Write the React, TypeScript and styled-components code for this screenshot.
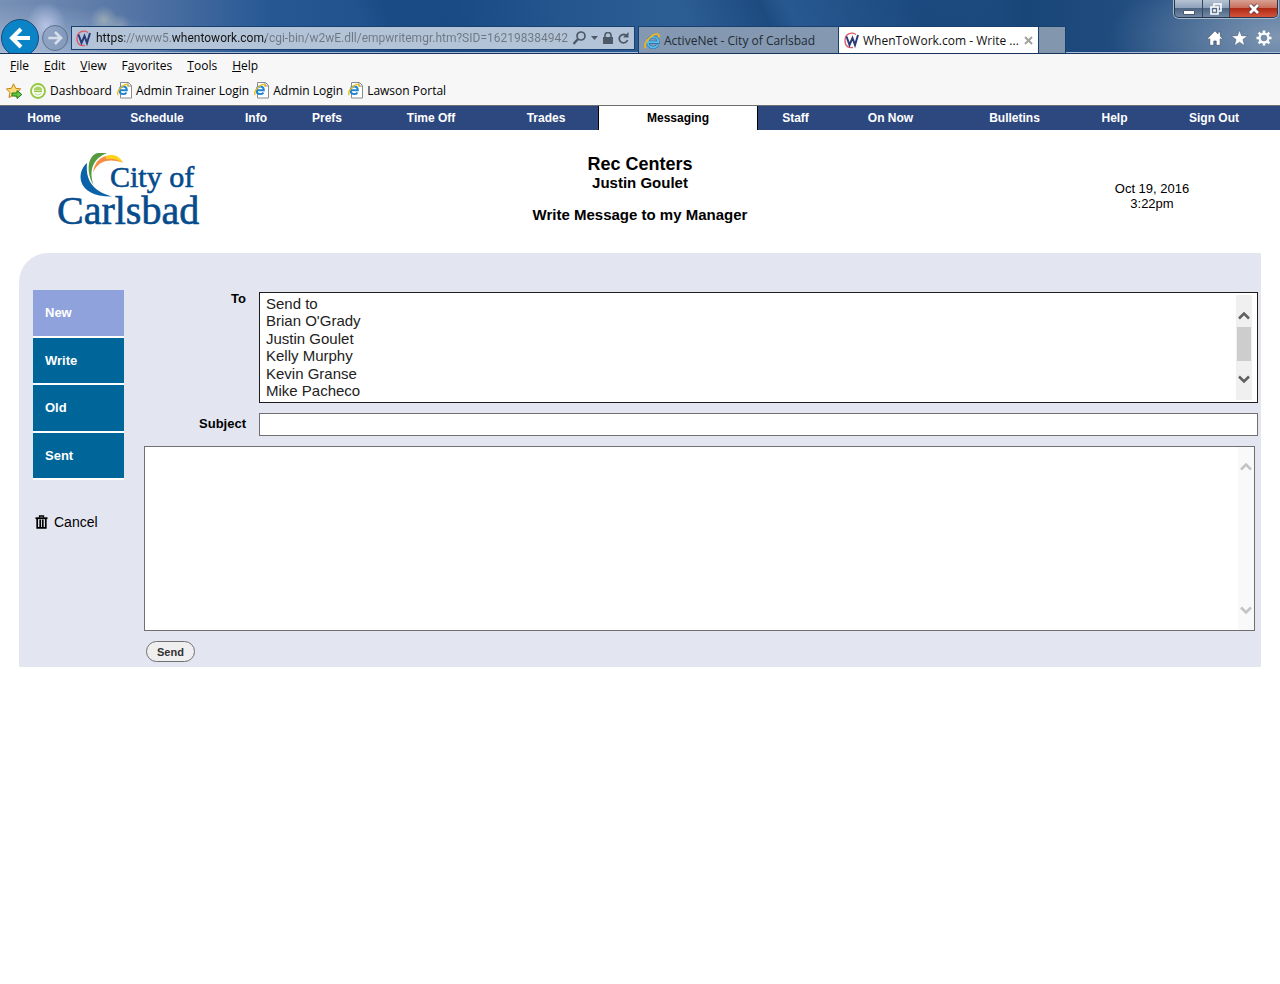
import React from 'react';
import styled, { createGlobalStyle } from 'styled-components';

const GlobalStyle = createGlobalStyle`
  * { box-sizing: border-box; }
  body {
    margin: 0;
    background: #fff;
    color: #000;
    font-family: "Liberation Sans", Arial, sans-serif;
  }
  a { color: inherit; text-decoration: none; }
  svg { display: block; flex: none; }
`;

/* ---------- Browser frame ---------- */

const Frame = styled.header`
  display: flex;
  align-items: flex-end;
  height: 54px;
  overflow: hidden;
  border-bottom: 1px solid #17335c;
  box-shadow: inset 0 -1px 0 #a9bcd8;
  font-family: "Open Sans", "Noto Sans", sans-serif;
  font-size: 12px;
  background:
    radial-gradient(ellipse 20px 24px at 46px 26px, #c3cdeecc, #c3cdee00),
    radial-gradient(ellipse 14px 14px at 104px 20px, #c3cbbd88, #c3cbbd00),
    radial-gradient(ellipse 12px 12px at 119px 26px, #c3bfbd66, #c3bfbd00),
    radial-gradient(ellipse 180px 60px at 20px 64px, #b8c8dedd, #b8c8de00),
    radial-gradient(ellipse 170px 80px at 100% 70%, #8097b2, #8097b200),
    linear-gradient(65deg, transparent 29%, #123f7655 31%, transparent 44%, transparent 54%, #0d366a66 60%, transparent 62%, #0d366a55 72%, transparent 78%),
    linear-gradient(90deg, #7890b5 0, #4e70a2 12%, #275894 21%, #1c4d87 35%, #2c5d93 52%, #24558c 70%, #194679 80%, #2b568a 100%);
`;

const BackButton = styled.button`
  display: grid;
  place-items: center;
  flex: none;
  width: 38px;
  height: 38px;
  margin: 0 3px -4px 1px;
  padding: 0;
  border: 1px solid #1c4a78;
  border-radius: 50%;
  background: #0a84c6;
`;

const ForwardButton = styled.button`
  display: grid;
  place-items: center;
  flex: none;
  width: 26px;
  height: 26px;
  margin: 0 3px 2px 0;
  padding: 0;
  border: 1px solid #5c708f;
  border-radius: 50%;
  background: #8196b799;
`;

const AddressBar = styled.form`
  display: flex;
  align-items: center;
  flex: 0 1 564px;
  min-width: 200px;
  height: 24px;
  margin: 0 3px 3px 0;
  padding: 0 5px 0 4px;
  gap: 5px;
  border: 1px solid #173f70;
  background: #b3c4d9;
`;

const AddressInput = styled.input`
  flex: 1;
  min-width: 0;
  height: 20px;
  padding: 0;
  border: 0;
  outline: 0;
  font: 12px Roboto, "Open Sans", sans-serif;
  color: transparent;
  background: linear-gradient(90deg, #111 29px, #6f7681 29px 76px, #111 76px 170px, #6f7681 170px);
  -webkit-background-clip: text;
  background-clip: text;
`;

const IconButton = styled.button`
  padding: 0;
  border: 0;
  background: none;
`;

const Tab = styled.div<{ $active?: boolean }>`
  display: flex;
  align-items: center;
  flex: 0 1 200px;
  min-width: 0;
  height: 27px;
  padding: 1px 5px 0;
  gap: 4px;
  border: 1px solid #17406f;
  border-width: 1px 0 0 1px;
  white-space: nowrap;
  color: ${p => (p.$active ? '#111' : '#222b36')};
  background: ${p => (p.$active ? '#fff' : '#8499b1')};
`;

const TabTitle = styled.span`
  flex: 1;
`;

const NewTab = styled.button`
  flex: none;
  width: 28px;
  height: 27px;
  padding: 0;
  border: 1px solid #17406f;
  border-bottom: 0;
  background: #8296ae;
`;

const FrameEnd = styled.div`
  display: flex;
  flex-direction: column;
  align-items: flex-end;
  justify-content: space-between;
  align-self: stretch;
  flex: none;
  margin-left: auto;
  padding: 0 2px 7px 0;
`;

const WindowControls = styled.div`
  display: flex;
  height: 18px;
  overflow: hidden;
  border: 1px solid #26364c;
  border-top: 0;
  border-radius: 0 0 5px 5px;
  box-shadow: 0 0 0 1px #a9b9cc;
`;

const WindowButton = styled.button<{ $close?: boolean }>`
  display: grid;
  place-items: center;
  width: ${p => (p.$close ? 48 : 27)}px;
  padding: 0;
  border: 0;
  border-left: 1px solid #34465f;
  background: ${p =>
    p.$close
      ? 'linear-gradient(#d9a193, #c9705d 45%, #b02a14 50%, #d4543c)'
      : 'linear-gradient(#b6c3d3, #8fa2ba 45%, #4d6684 50%, #7189a5)'};
  &:first-child { border-left: 0; }
`;

const Tools = styled.div`
  display: flex;
  gap: 8px;
  padding-right: 6px;
`;

const Bars = styled.div`
  height: 52px;
  border-bottom: 1px solid #6e6e6e;
  background: #f7f7f7;
  font-family: "Open Sans", "Noto Sans", sans-serif;
  font-size: 12px;
  line-height: 16px;
`;

const MenuBar = styled.nav`
  display: flex;
  gap: 15px;
  padding: 4px 10px;
`;

const MenuButton = styled.button`
  padding: 0;
  border: 0;
  background: none;
  color: #000;
  font: inherit;
`;

const FavoritesBar = styled.nav`
  display: flex;
  align-items: center;
  gap: 5px;
  padding: 4px 6px 0;
`;

const AddButton = styled(IconButton)`
  margin-right: 3px;
`;

const Favorite = styled.a`
  display: flex;
  align-items: center;
  gap: 4px;
  white-space: nowrap;
`;

/* ---------- Site ---------- */

const SiteNav = styled.nav`
  display: grid;
  grid-template-columns: 88fr 138fr 60fr 82fr 126fr 104fr 160fr 75fr 115fr 133fr 67fr 132fr;
  height: 24px;
  background: #2d487f;
  font-size: 12px;
  font-weight: bold;
  line-height: 24px;
  text-align: center;
`;

const NavLink = styled.a<{ $active?: boolean }>`
  white-space: nowrap;
  color: ${p => (p.$active ? '#000' : '#fff')};
  background: ${p => (p.$active ? '#fff' : 'none')};
  border: solid #000;
  border-width: ${p => (p.$active ? '0 1px' : '0')};
`;

const Masthead = styled.section`
  display: grid;
  grid-template-columns: 1fr 3fr 1fr;
  justify-items: center;
  padding: 23px 0 14px;
`;

const Headings = styled.div`
  text-align: center;
  font-weight: bold;
`;

const Org = styled.h1`
  margin: 0;
  font-size: 18px;
  line-height: 22px;
`;

const Line = styled.h2`
  margin: 0 0 16px;
  font-size: 15px;
  line-height: 16px;
`;

const Clock = styled.time`
  padding-top: 28px;
  font-size: 13px;
  line-height: 15px;
  text-align: center;
`;

const Panel = styled.main`
  display: flex;
  gap: 20px;
  margin: 0 19px;
  padding: 37px 3px 5px 14px;
  border-top-left-radius: 29px;
  background: #e3e5f0;
`;

const Side = styled.aside`
  flex: none;
  width: 91px;
`;

const SideList = styled.ul`
  display: grid;
  grid-auto-rows: 1fr;
  height: 190px;
  margin: 0 0 33px;
  padding: 0;
  list-style: none;
`;

const SideItem = styled.li<{ $active?: boolean }>`
  display: flex;
  align-items: center;
  padding-left: 12px;
  border-bottom: 2px solid #fff;
  background: ${p => (p.$active ? '#8fa2dc' : '#00669a')};
  color: #fff;
  font-size: 13px;
  font-weight: bold;
`;

const Cancel = styled.a`
  display: flex;
  align-items: center;
  gap: 6px;
  padding-left: 2px;
  font-size: 14px;
  line-height: 18px;
`;

const Form = styled.form`
  flex: 1;
  min-width: 0;
  padding-top: 2px;
`;

const Fields = styled.div`
  display: grid;
  grid-template-columns: 102px 1fr;
  gap: 10px 13px;
  margin-bottom: 10px;
`;

const Label = styled.label`
  font-size: 13px;
  font-weight: bold;
  line-height: 14px;
  text-align: right;
  &:nth-of-type(2) { padding-top: 4px; }
`;

const Scrollable = styled.div`
  position: relative;
`;

const Recipients = styled.select`
  display: block;
  width: 100%;
  height: 111px;
  padding: 2px 6px;
  overflow: hidden;
  border: 1px solid #1c1c1c;
  border-radius: 0;
  background: #fff;
  color: #222;
  font: 15px "Liberation Sans", Arial, sans-serif;
  scrollbar-width: none;
  option { padding: 0; min-height: 0; height: 17px; line-height: 17px; }
  option:nth-child(even) { height: 18px; }
`;

const Subject = styled.input`
  display: block;
  width: 100%;
  height: 23px;
  padding: 0 6px;
  border: 1px solid #707070;
  font-size: 15px;
`;

const MessageBox = styled(Scrollable)`
  margin: 0 3px 10px 0;
`;

const Message = styled.textarea`
  display: block;
  width: 100%;
  height: 185px;
  resize: none;
  border: 1px solid #707070;
  font-size: 15px;
`;

const Scrollbar = styled.div<{ $inset: number; $shade: string; $pad: number }>`
  position: absolute;
  top: ${p => p.$inset}px;
  right: ${p => (p.$inset === 1 ? 1 : 6)}px;
  bottom: ${p => p.$inset}px;
  display: flex;
  flex-direction: column;
  align-items: center;
  justify-content: space-between;
  width: 16px;
  padding: ${p => p.$pad}px 0;
  background: ${p => p.$shade};
`;

const Thumb = styled.div`
  width: 14px;
  height: 34px;
  margin-bottom: 8px;
  background: #cdcdcd;
`;

const Send = styled.button`
  display: block;
  height: 21px;
  margin-left: 2px;
  padding: 0 10px;
  border: 1px solid #707070;
  border-radius: 11px;
  background: #efefef;
  color: #333;
  font: bold 11px "Liberation Sans", Arial, sans-serif;
`;

/* ---------- Drawings ---------- */

const Arrow = ({ size, flip, color }: { size: number; flip?: boolean; color: string }) => (
  <svg width={size} height={size} viewBox="0 0 24 24" fill="none" stroke={color} strokeWidth="4">
    <path d={flip ? 'M2 12h18M12 3l9 9-9 9' : 'M22 12H4M13 3l-9 9 9 9'} />
  </svg>
);

const SiteMark = () => (
  <svg width="15" height="17" viewBox="0 0 15 17" fill="none">
    <path d="M12 2.500C7-.5 1 2 1 8.500s4 7.500 8 7" stroke="#e0596a" strokeWidth="1.300" />
    <path d="M2.500 4.500 5.500 13 8.500 6l2.500 7 3-10" stroke="#2b3a78" strokeWidth="2" />
  </svg>
);

const Explorer = () => (
  <svg width="16" height="16" viewBox="0 0 16 16" fill="none">
    <path d="M4 9.200h10.200C14.200 5.800 12 3.800 9 3.800S3.800 6 3.800 9.200s2.200 5.300 5.200 5.300c2.200 0 3.800-.9 4.600-2.600" stroke="#1c6fae" strokeWidth="3" />
    <path d="M4 9.200h10.200C14.200 5.800 12 3.800 9 3.800S3.800 6 3.800 9.200s2.200 5.300 5.200 5.300c2.200 0 3.800-.9 4.600-2.600" stroke="#56bdee" strokeWidth="1.800" />
    <path d="M2 15C-1 13 3.500 4.500 10 1.700c4-1.700 5.800-.2 4.600 2.800" stroke="#f3b71a" strokeWidth="1.700" />
  </svg>
);

const PageIcon = () => (
  <svg width="15" height="17" viewBox="0 0 15 17" fill="none">
    <path d="M3.500.5h8l3 3v12.500h-11z" fill="#fff" stroke="#8b8b8b" />
    <path d="M11 .5V4h3.500" stroke="#8b8b8b" />
    <path d="M2.500 8.300h7.300c0-2.300-1.500-3.700-3.500-3.700S2.700 6.200 2.700 8.500s1.400 3.600 3.500 3.600c1.500 0 2.600-.6 3.200-1.700" stroke="#2086d2" strokeWidth="2" />
    <path d="M1.200 13C-.8 11 3 5 7.500 2.900c2.800-1.200 4 0 3.200 1.900" stroke="#efbd1d" strokeWidth="1.400" />
  </svg>
);

const AddFavorite = () => (
  <svg width="16" height="16" viewBox="0 0 16 16">
    <path d="m7.500.8 2.200 4.500 5 .6-3.600 3.500.9 5.100-4.500-2.400L3 14.500l.9-5.100L.4 5.900l5-.6z" fill="#fcdc79" stroke="#c98213" />
    <path d="M6 10h5V7.500l4.800 4-4.800 4V13H6z" fill="#63c93f" stroke="#26791c" />
  </svg>
);

const DashboardIcon = () => (
  <svg width="16" height="16" viewBox="0 0 16 16" fill="none">
    <circle cx="8" cy="8" r="7" fill="#fff" stroke="#93c83e" strokeWidth="1.900" />
    <path d="M3.500 7.500C4 5 5.500 3.500 8 3.500s4 1.500 4.500 4z" fill="#a9d45f" />
    <path d="M4 8.500h8" stroke="#93c83e" strokeWidth="1.300" />
    <path d="M5 10.500c1.500 2 4.500 2 6 0" stroke="#b9dc80" strokeWidth="1.200" />
  </svg>
);

const Chevron = ({ down, color }: { down?: boolean; color: string }) => (
  <svg width="12" height="9" viewBox="0 0 12 9" fill="none" stroke={color} strokeWidth="2.500">
    <path d={down ? 'm1 1.500 5 5 5-5' : 'm1 7.500 5-5 5 5'} />
  </svg>
);

const CityLogo = () => (
  <svg width="144" height="84" viewBox="0 0 144 84" role="img" aria-label="City of Carlsbad">
    <path d="M31 10C20 19 20 44 56 43.500 40 39 29 30 31 10z" fill="#0a62a8" />
    <path d="M37.500 32C33 18 36 6 51 0h-9C31 2 30 20 37.500 32z" fill="#559b3e" />
    <path d="M37 19.500C42 8 52 5 67 9.500 58-1 40 0 37 19.500z" fill="#f68d42" />
    <path d="M50 3c7-2.500 13-.5 17 6.500-5-3-11-4.500-17-3.500z" fill="#ffd21c" />
    <g fill="#064b8c" stroke="#064b8c" strokeWidth=".6" fontFamily="'Liberation Serif', 'Times New Roman', serif">
      <text x="54" y="34" fontSize="30">City of</text>
      <text x="1" y="71" fontSize="40">Carlsbad</text>
    </g>
  </svg>
);

const TrashIcon = () => (
  <svg width="13" height="14" viewBox="0 0 13 14" fill="none" stroke="#000">
    <path d="M4.500 2.500V1h4v1.500" strokeWidth="1.300" />
    <path d="M.5 3.200h12" strokeWidth="1.800" />
    <path d="M2.200 4v8.800h8.600V4M5.200 4.500v8M7.800 4.500v8" strokeWidth="1.700" />
  </svg>
);

const SearchIcon = () => (
  <svg width="13" height="14" viewBox="0 0 13 14" fill="none" stroke="#4e5968">
    <circle cx="8" cy="5" r="4" strokeWidth="1.700" />
    <path d="m5 8-4.500 5" strokeWidth="2.300" />
  </svg>
);

const CaretIcon = () => (
  <svg width="7" height="4" viewBox="0 0 7 4"><path d="M0 0h7L3.500 4z" fill="#4e5968" /></svg>
);

const LockIcon = () => (
  <svg width="10" height="13" viewBox="0 0 10 13">
    <path d="M0 5h10v7H0z" fill="#4e5968" />
    <path d="M2 6V3.500a3 3 0 0 1 6 0V6" fill="none" stroke="#4e5968" strokeWidth="1.600" />
  </svg>
);

const RefreshIcon = () => (
  <svg width="11" height="13" viewBox="0 0 11 13" fill="none">
    <path d="M8 3.300A4.200 4.200 0 1 0 9.500 8" stroke="#4e5968" strokeWidth="1.800" />
    <path d="M10.500 0v5.500H5z" fill="#4e5968" />
  </svg>
);

const HomeIcon = () => (
  <svg width="16" height="16" viewBox="0 0 16 16">
    <path d="M8 .8.6 8.200l1.300 1.300.9-.8V15.300h4V11h2.400v4.300h4V8.700l.9.800 1.300-1.300-2-2V2h-2.400v1.800z" fill="#fff" stroke="#3d526c" strokeWidth=".7" />
  </svg>
);

const StarIcon = () => (
  <svg width="17" height="16" viewBox="0 0 17 16">
    <path d="m8.500.2 2.100 5.500 6.100.2-4.800 3.700 1.800 6.100-5.200-3.500-5.200 3.500 1.800-6.100L.3 5.900l6.100-.2z" fill="#fff" stroke="#3d526c" strokeWidth=".5" />
  </svg>
);

const GearIcon = () => (
  <svg width="16" height="16" viewBox="0 0 16 16" fill="none" stroke="#fff">
    <path d="M8 .5V4M8 12v3.500M.5 8H4M12 8h3.500M2.700 2.700l2.500 2.500M10.800 10.800l2.500 2.500M13.300 2.700l-2.500 2.500M5.200 10.800l-2.500 2.500" strokeWidth="2.600" />
    <circle cx="8" cy="8" r="4.400" strokeWidth="2.200" />
  </svg>
);

/* ---------- Content ---------- */

const menus = ['File', 'Edit', 'View', 'Favorites', 'Tools', 'Help'];
const sections = ['Home', 'Schedule', 'Info', 'Prefs', 'Time Off', 'Trades', 'Messaging', 'Staff', 'On Now', 'Bulletins', 'Help', 'Sign Out'];
const folders = ['New', 'Write', 'Old', 'Sent'];
const people = ['Send to', "Brian O'Grady", 'Justin Goulet', 'Kelly Murphy', 'Kevin Granse', 'Mike Pacheco'];

export default function App() {
  return (
    <>
      <GlobalStyle />
      <Frame>
        <BackButton aria-label="Back"><Arrow size={24} color="#fff" /></BackButton>
        <ForwardButton aria-label="Forward"><Arrow size={16} flip color="#d5ddeb" /></ForwardButton>
        <AddressBar onSubmit={e => e.preventDefault()}>
          <SiteMark />
          <AddressInput aria-label="Address" defaultValue="https://www5.whentowork.com/cgi-bin/w2wE.dll/empwritemgr.htm?SID=162198384942" />
          <IconButton type="button" aria-label="Search"><SearchIcon /></IconButton>
          <IconButton type="button" aria-label="Show addresses"><CaretIcon /></IconButton>
          <IconButton type="button" aria-label="Security report"><LockIcon /></IconButton>
          <IconButton type="button" aria-label="Refresh"><RefreshIcon /></IconButton>
        </AddressBar>
        <Tab><Explorer /><TabTitle>ActiveNet - City of Carlsbad</TabTitle></Tab>
        <Tab $active>
          <SiteMark />
          <TabTitle>WhenToWork.com - Write ...</TabTitle>
          <IconButton aria-label="Close tab">
            <svg width="9" height="9" viewBox="0 0 9 9" stroke="#a2a2a2" strokeWidth="2"><path d="m1 1 7 7M8 1 1 8" /></svg>
          </IconButton>
        </Tab>
        <NewTab aria-label="New tab" />
        <FrameEnd>
          <WindowControls>
            <WindowButton aria-label="Minimize">
              <svg width="12" height="12" viewBox="0 0 12 12"><path d="M.5 7.500h11v4H.5z" fill="#fff" stroke="#4b596b" /></svg>
            </WindowButton>
            <WindowButton aria-label="Restore">
              <svg width="12" height="12" viewBox="0 0 12 12" fill="none" stroke="#fff" strokeWidth="1.600"><path d="M4 3V1h7v7H9M1 4h7v7H1zM4 7h1v1H4z" /></svg>
            </WindowButton>
            <WindowButton $close aria-label="Close">
              <svg width="12" height="12" viewBox="0 0 12 12" fill="none"><path d="m2 2 8 8M10 2l-8 8" stroke="#5b3540" strokeWidth="4.500" /><path d="m2 2 8 8M10 2l-8 8" stroke="#fff" strokeWidth="2.800" /></svg>
            </WindowButton>
          </WindowControls>
          <Tools>
            <IconButton aria-label="Home page"><HomeIcon /></IconButton>
            <IconButton aria-label="Favorites"><StarIcon /></IconButton>
            <IconButton aria-label="Settings"><GearIcon /></IconButton>
          </Tools>
        </FrameEnd>
      </Frame>
      <Bars>
        <MenuBar>
          {menus.map(m => {
            const key = m === 'Favorites' ? 1 : 0;
            return (
              <MenuButton key={m}>{m.slice(0, key)}<u>{m[key]}</u>{m.slice(key + 1)}</MenuButton>
            );
          })}
        </MenuBar>
        <FavoritesBar>
          <AddButton aria-label="Add to favorites bar"><AddFavorite /></AddButton>
          <Favorite href="#"><DashboardIcon />Dashboard</Favorite>
          <Favorite href="#"><PageIcon />Admin Trainer Login</Favorite>
          <Favorite href="#"><PageIcon />Admin Login</Favorite>
          <Favorite href="#"><PageIcon />Lawson Portal</Favorite>
        </FavoritesBar>
      </Bars>

      <SiteNav>
        {sections.map(s => <NavLink key={s} href="#" $active={s === 'Messaging'}>{s}</NavLink>)}
      </SiteNav>
      <Masthead>
        <CityLogo />
        <Headings>
          <Org>Rec Centers</Org>
          <Line>Justin Goulet</Line>
          <Line>Write Message to my Manager</Line>
        </Headings>
        <Clock>Oct 19, 2016<br />3:22pm</Clock>
      </Masthead>
      <Panel>
        <Side>
          <SideList>
            {folders.map(f => <SideItem key={f} $active={f === 'New'}><a href="#">{f}</a></SideItem>)}
          </SideList>
          <Cancel href="#"><TrashIcon />Cancel</Cancel>
        </Side>
        <Form onSubmit={e => e.preventDefault()}>
          <Fields>
            <Label htmlFor="to">To</Label>
            <Scrollable>
              <Recipients id="to" multiple size={6}>
                {people.map(p => <option key={p}>{p}</option>)}
              </Recipients>
              <Scrollbar $inset={3} $shade="#f0f0f0" $pad={16}>
                <Chevron color="#606060" />
                <Thumb />
                <Chevron down color="#606060" />
              </Scrollbar>
            </Scrollable>
            <Label htmlFor="subject">Subject</Label>
            <Subject id="subject" type="text" />
          </Fields>
          <MessageBox>
            <Message aria-label="Message" />
            <Scrollbar $inset={1} $shade="#f9f9f9" $pad={15}>
              <Chevron color="#c3c3c3" />
              <Chevron down color="#c3c3c3" />
            </Scrollbar>
          </MessageBox>
          <Send type="submit">Send</Send>
        </Form>
      </Panel>
    </>
  );
}
